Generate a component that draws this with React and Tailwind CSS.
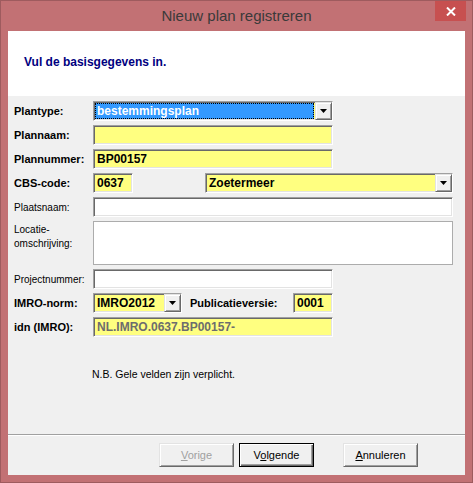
import React from 'react';

const sunken =
  'border border-t-[#a0a0a0] border-l-[#a0a0a0] border-b-white border-r-white shadow-[inset_1px_1px_0_#696969,inset_-1px_-1px_0_#e3e3e3]';
const raised =
  'border border-t-[#e3e3e3] border-l-[#e3e3e3] border-b-[#696969] border-r-[#696969] shadow-[inset_1px_1px_0_#ffffff,inset_-1px_-1px_0_#a0a0a0]';

function Label({ children, bold = true, className = '' }) {
  return (
    <div
      className={`w-[79px] shrink-0 text-black leading-[13px] ${
        bold ? 'font-bold text-[11px]' : 'text-[10px]'
      } ${className}`}
    >
      {children}
    </div>
  );
}

function Field({ value = '', yellow = false, width, muted = false }) {
  return (
    <div
      className={`h-[20px] ${sunken} ${yellow ? 'bg-[#ffff80]' : 'bg-white'} flex items-center pl-[3px] text-[12px] font-bold ${
        muted ? 'text-[#6d6d6d]' : 'text-black'
      }`}
      style={{ width }}
    >
      {value}
    </div>
  );
}

function Arrow() {
  return (
    <div className={`w-[17px] h-full bg-[#f0f0f0] ${raised} flex items-center justify-center shrink-0`}>
      <svg width="7" height="4" viewBox="0 0 7 4">
        <path d="M0 0h7L3.5 4z" fill="#000" />
      </svg>
    </div>
  );
}

function Combo({ value, width, focused = false }) {
  return (
    <div className={`h-[20px] ${sunken} bg-[#ffff80] flex`} style={{ width }}>
      <div className="flex-1 p-[1px] flex min-w-0">
        {focused ? (
          <div className="flex-1 bg-[#3399ff] outline-1 outline-dotted outline-black -outline-offset-1 text-white text-[12px] font-bold flex items-center pl-[2px] leading-none">
            {value}
          </div>
        ) : (
          <div className="flex-1 text-black text-[12px] font-bold flex items-center pl-[2px]">{value}</div>
        )}
      </div>
      <Arrow />
    </div>
  );
}

function Button({ children, disabled = false, isDefault = false, className = '' }) {
  return (
    <div
      className={`w-[75px] h-[24px] bg-[#f0f0f0] text-[11px] flex items-center justify-center ${
        isDefault
          ? 'border border-black shadow-[inset_1px_1px_0_#ffffff,inset_-1px_-1px_0_#696969,inset_-2px_-2px_0_#a0a0a0]'
          : raised
      } ${disabled ? 'text-[#a0a0a0]' : 'text-black'} ${className}`}
    >
      {children}
    </div>
  );
}

export default function App() {
  return (
    <div
      className="w-[473px] h-[483px] bg-[#c27174] border border-[#9e5b5e] flex flex-col"
      style={{ fontFamily: '"Liberation Sans", Arial, sans-serif' }}
    >
      {/* Title bar */}
      <div className="h-[30px] relative flex items-center justify-center shrink-0">
        <span className="text-[15px] text-[#3a3a3a] pt-[1px]">Nieuw plan registreren</span>
        <div className="absolute right-[6px] top-0 w-[31px] h-[20px] bg-[#c75050] flex items-center justify-center">
          <svg width="10" height="9" viewBox="0 0 10 9">
            <path d="M1 0.5l8 8M9 0.5l-8 8" stroke="#fff" strokeWidth="2" />
          </svg>
        </div>
      </div>

      {/* Client area */}
      <div className="mx-[7px] mb-[7px] flex-1 bg-[#f0f0f0] flex flex-col">
        <div className="h-[65px] bg-white flex items-center pl-[16px] shrink-0">
          <span className="text-[12px] font-bold text-[#000080] pb-[3px]">Vul de basisgegevens in.</span>
        </div>

        <div className="pt-[5px] pl-[6px] flex flex-col gap-[4px]">
          <div className="flex items-center">
            <Label>Plantype:</Label>
            <Combo value="bestemmingsplan" width={240} focused />
          </div>
          <div className="flex items-center">
            <Label>Plannaam:</Label>
            <Field yellow width={240} />
          </div>
          <div className="flex items-center">
            <Label>Plannummer:</Label>
            <Field yellow width={240} value="BP00157" />
          </div>
          <div className="flex items-center">
            <Label>CBS-code:</Label>
            <Field yellow width={40} value="0637" />
            <div className="ml-[72px]">
              <Combo value="Zoetermeer" width={248} />
            </div>
          </div>
          <div className="flex items-center">
            <Label bold={false}>Plaatsnaam:</Label>
            <Field width={360} />
          </div>
          <div className="flex items-start">
            <Label bold={false} className="pt-[2px] leading-[14px]">
              Locatie-
              <br />
              omschrijving:
            </Label>
            <div className="w-[360px] h-[44px] bg-white border border-[#acacac]" />
          </div>
          <div className="flex items-center">
            <Label bold={false}>Projectnummer:</Label>
            <Field width={240} />
          </div>
          <div className="flex items-center">
            <Label>IMRO-norm:</Label>
            <Combo value="IMRO2012" width={89} />
            <div className="ml-[8px] w-[103px] text-[11px] font-bold text-black">Publicatieversie:</div>
            <Field yellow width={40} value="0001" />
          </div>
          <div className="flex items-center">
            <Label>idn (IMRO):</Label>
            <Field yellow muted width={240} value="NL.IMRO.0637.BP00157-" />
          </div>
        </div>

        <div className="pl-[84px] mt-[31px] text-[10.5px] text-black leading-[13px]">
          N.B. Gele velden zijn verplicht.
        </div>

        <div className="flex-1" />

        <div className="h-[41px] shrink-0 border-t border-[#a0a0a0] shadow-[inset_0_1px_0_#ffffff] pt-[8px] pl-[151px] flex items-start">
          <Button disabled>
            <span>
              <span className="underline">V</span>orige
            </span>
          </Button>
          <Button isDefault className="ml-[5px]">
            <span>
              V<span className="underline">o</span>lgende
            </span>
          </Button>
          <Button className="ml-[29px]">
            <span>
              <span className="underline">A</span>nnuleren
            </span>
          </Button>
        </div>
      </div>
    </div>
  );
}
